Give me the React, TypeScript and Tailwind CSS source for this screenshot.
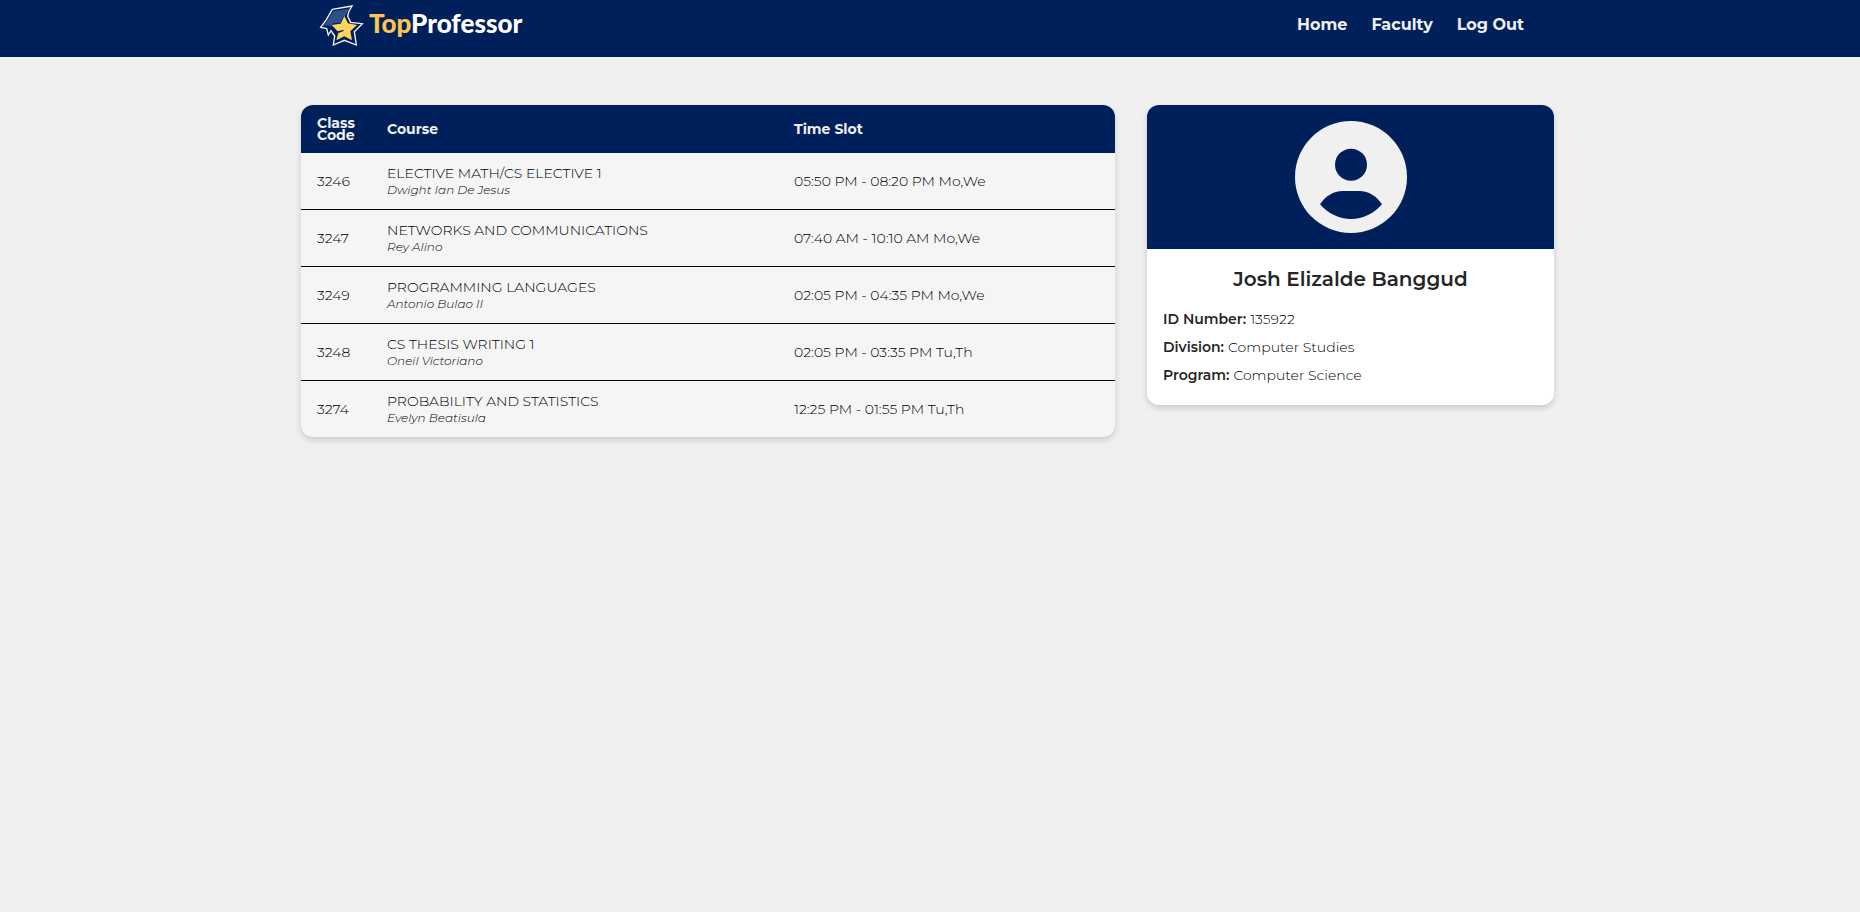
const classes = [
  { code: "3246", course: "ELECTIVE MATH/CS ELECTIVE 1", professor: "Dwight Ian De Jesus", slot: "05:50 PM - 08:20 PM Mo,We" },
  { code: "3247", course: "NETWORKS AND COMMUNICATIONS", professor: "Rey Alino", slot: "07:40 AM - 10:10 AM Mo,We" },
  { code: "3249", course: "PROGRAMMING LANGUAGES", professor: "Antonio Bulao II", slot: "02:05 PM - 04:35 PM Mo,We" },
  { code: "3248", course: "CS THESIS WRITING 1", professor: "Oneil Victoriano", slot: "02:05 PM - 03:35 PM Tu,Th" },
  { code: "3274", course: "PROBABILITY AND STATISTICS", professor: "Evelyn Beatisula", slot: "12:25 PM - 01:55 PM Tu,Th" },
];

const details = [
  { label: "ID Number:", value: "135922" },
  { label: "Division:", value: "Computer Studies" },
  { label: "Program:", value: "Computer Science" },
];

const cell = "h-[57px] border-b border-black group-last:h-14 group-last:border-b-0";

function StarLogo() {
  return (
    <svg viewBox="58 10 135 129" className="h-[43px] w-[45px] shrink-0" aria-hidden="true">
      <path
        d="M98 26 L157 16 L147 34 L144 47 L153 65 L188 69 L164 93 L170 133 L134 119 L101 133 L105 106 L94 90 L86 103 L81 84 L63 80 L80 57 Z"
        fill="#00205c"
        stroke="#f4f6fa"
        strokeWidth="4"
        strokeLinejoin="miter"
      />
      <path d="M101 32 L148 24 L137 45 L130 49 L122 66 L101 68 L94 76 L84 74 L71 76 L86 55 Z" fill="#2f4f8b" />
      <path
        d="M134 46 L145 68 L172 73 L152 92 L157 119 L134 107 L110 119 L116 97 L130 92 L134 87 L114 92 L96 73 L123 69 Z"
        fill="#ffd35c"
      />
    </svg>
  );
}

function Avatar() {
  return (
    <svg viewBox="0 0 336 336" className="size-28" role="img" aria-label="Profile">
      <circle cx="168" cy="168" r="168" fill="#f0f0f0" />
      <circle cx="168" cy="131" r="48" fill="#00205c" />
      <path
        d="M75 250 C91 226 115 210 143 210 H193 C221 210 245 226 261 250 C237 278 204 294 168 294 C132 294 99 278 75 250 Z"
        fill="#00205c"
      />
    </svg>
  );
}

export default function App() {
  return (
    <div className="min-h-screen bg-[#f0f0f0] font-[Montserrat,Inter,sans-serif] text-sm text-[#262626]">
      <header className="bg-[#00205c] pl-4 pr-[21px]">
        <div className="mx-auto flex h-[57px] max-w-[1253px] items-start justify-between pl-[18px] pr-[30px]">
          <a href="#" className="flex items-start gap-[5px] pt-1">
            <StarLogo />
            <span className="font-[Lato,sans-serif] text-[26px] font-black leading-[38px] text-white">
              <span className="text-[#ffc552]">Top</span>Professor
            </span>
          </a>
          <nav className="flex gap-6 pt-[13px] text-base font-bold leading-6 text-[#f0f0f0]">
            <a href="#">Home</a>
            <a href="#">Faculty</a>
            <a href="#">Log Out</a>
          </nav>
        </div>
      </header>

      <main className="pl-4 pr-[21px] pt-12">
        <div className="mx-auto grid max-w-[1253px] grid-cols-1 items-start gap-8 lg:grid-cols-[2fr_1fr]">
          <div className="overflow-hidden rounded-xl bg-[#f5f5f5] shadow-[0_3px_6px_rgba(0,0,0,0.16)]">
            <table className="w-full table-fixed border-separate border-spacing-0 text-left">
              <colgroup>
                <col className="w-[70px]" />
                <col className="w-1/2" />
                <col />
              </colgroup>
              <thead className="bg-[#00205c] text-[#f0f0f0]">
                <tr className="h-12 font-bold leading-3">
                  <th scope="col" className="pl-4">Class Code</th>
                  <th scope="col" className="px-4">Course</th>
                  <th scope="col" className="px-4">Time Slot</th>
                </tr>
              </thead>
              <tbody className="font-light text-black">
                {classes.map((c) => (
                  <tr key={c.code} className="group">
                    <td className={`${cell} pl-4`}>{c.code}</td>
                    <td className={`${cell} px-4`}>
                      <div className="leading-[17px]">{c.course}</div>
                      <div className="text-xs italic leading-4">{c.professor}</div>
                    </td>
                    <td className={`${cell} px-4`}>{c.slot}</td>
                  </tr>
                ))}
              </tbody>
            </table>
          </div>

          <section className="overflow-hidden rounded-xl bg-white shadow-[0_3px_6px_rgba(0,0,0,0.16)]">
            <div className="flex justify-center bg-[#00205c] py-4">
              <Avatar />
            </div>
            <div className="px-4 pb-4 pt-4">
              <h1 className="text-center text-xl font-semibold leading-7">Josh Elizalde Banggud</h1>
              <dl className="pt-3">
                {details.map((d) => (
                  <div key={d.label} className="flex gap-1 leading-7">
                    <dt className="font-semibold">{d.label}</dt>
                    <dd className="font-light text-black">{d.value}</dd>
                  </div>
                ))}
              </dl>
            </div>
          </section>
        </div>
      </main>
    </div>
  );
}
